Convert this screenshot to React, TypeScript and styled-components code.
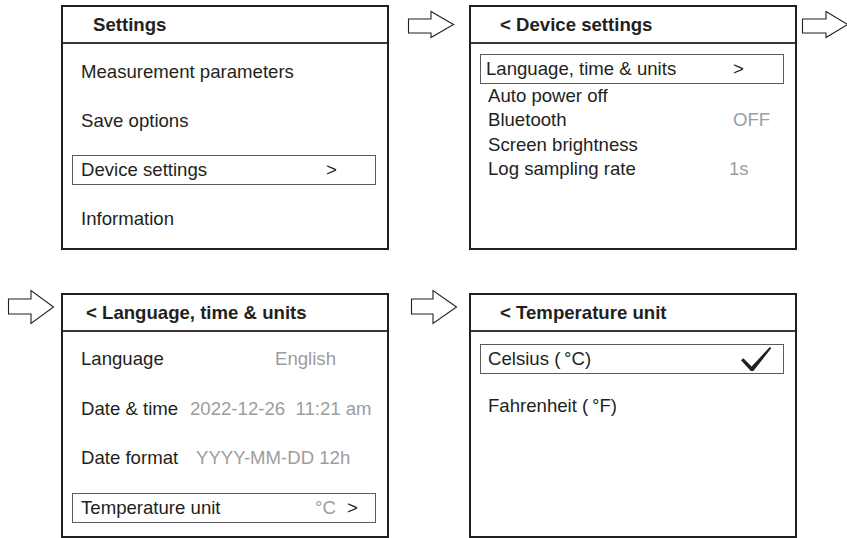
import React from "react";
import styled, { createGlobalStyle } from "styled-components";

const Global = createGlobalStyle`
  html, body { margin: 0; padding: 0; background: #ffffff; }
  body { font-family: "Liberation Sans", Arial, sans-serif; color: #231f20; }
`;

const Page = styled.div`
  width: 847px;
  height: 538px;
  overflow: hidden;
  box-sizing: border-box;
  padding-top: 5px;
  display: grid;
  grid-template-columns: 61px 328px 80px 328px 1fr;
  grid-template-rows: 245px 245px;
  row-gap: 43px;
`;

const ArrowCell = styled.div<{ $left: number; $top: number }>`
  display: flex;
  align-items: flex-start;
  padding-left: ${(p) => p.$left}px;
  margin-top: ${(p) => p.$top}px;
`;

const Panel = styled.section`
  box-sizing: border-box;
  height: 100%;
  border: 2px solid #231f20;
  display: flex;
  flex-direction: column;
  overflow: hidden;
`;

const Header = styled.header<{ $indent: number }>`
  flex: none;
  height: 35px;
  border-bottom: 2px solid #3a3839;
  display: flex;
  align-items: center;
  padding-left: ${(p) => p.$indent}px;
  font-size: 18.6px;
  font-weight: 700;
  white-space: nowrap;
`;

const Body = styled.div<{ $pt: number; $gap: number }>`
  display: flex;
  flex-direction: column;
  gap: ${(p) => p.$gap}px;
  padding: ${(p) => p.$pt}px 11px 0 9px;
`;

const Row = styled.div<{ $h: number; $sel?: boolean; $pl: number; $col?: number }>`
  box-sizing: border-box;
  height: ${(p) => p.$h}px;
  border: 1px solid ${(p) => (p.$sel ? "#5c5a5b" : "transparent")};
  padding-left: ${(p) => p.$pl}px;
  display: grid;
  grid-template-columns: ${(p) => (p.$col ? `${p.$col}px 1fr` : "1fr")};
  align-items: center;
  font-size: 18.6px;
  white-space: pre;
`;

const Label = styled.span`
  color: #231f20;
`;

const Value = styled.span`
  display: flex;
  align-items: center;
  color: #9d9d9d;
`;

const Chevron = styled.span<{ $gap?: number }>`
  color: #231f20;
  margin-left: ${(p) => p.$gap ?? 0}px;
`;

type ArrowProps = { w: number; h: number; hx: number; st: number; sb: number };

const Arrow = ({ w, h, hx, st, sb }: ArrowProps) => (
  <svg width={w + 2} height={h + 2} viewBox={`-1 -1 ${w + 2} ${h + 2}`}>
    <polygon
      points={`0.5,${st} ${hx},${st} ${hx},0.5 ${w - 0.5},${h / 2} ${hx},${h - 0.5} ${hx},${sb} 0.5,${sb}`}
      fill="#ffffff"
      stroke="#231f20"
      strokeWidth={1.1}
      strokeLinejoin="miter"
    />
  </svg>
);

const Check = () => (
  <svg width="31" height="25" viewBox="0 0 31 25">
    <polygon
      points="0,13.2 2.4,11.2 10.6,19.4 28.8,0 30.4,1 12.4,24 9.8,24"
      fill="#231f20"
    />
  </svg>
);

export default function App() {
  return (
    <>
      <Global />
      <Page>
        {/* Row 1 */}
        <div />
        <Panel>
          <Header $indent={30}>Settings</Header>
          <Body $pt={13} $gap={19}>
            <Row $h={30} $pl={8}>
              <Label>Measurement parameters</Label>
            </Row>
            <Row $h={30} $pl={8}>
              <Label>Save options</Label>
            </Row>
            <Row $h={30} $pl={8} $sel $col={245}>
              <Label>Device settings</Label>
              <Value>
                <Chevron>&gt;</Chevron>
              </Value>
            </Row>
            <Row $h={30} $pl={8}>
              <Label>Information</Label>
            </Row>
          </Body>
        </Panel>
        <ArrowCell $left={18} $top={5}>
          <Arrow w={46} h={27} hx={23} st={8} sb={22} />
        </ArrowCell>
        <Panel>
          <Header $indent={29}>&lt; Device settings</Header>
          <Body $pt={10} $gap={0}>
            <Row $h={30} $pl={5} $sel $col={247}>
              <Label>Language, time &amp; units</Label>
              <Value>
                <Chevron>&gt;</Chevron>
              </Value>
            </Row>
            <Row $h={24.3} $pl={7}>
              <Label>Auto power off</Label>
            </Row>
            <Row $h={24.3} $pl={7} $col={245}>
              <Label>Bluetooth</Label>
              <Value>OFF</Value>
            </Row>
            <Row $h={24.3} $pl={7}>
              <Label>Screen brightness</Label>
            </Row>
            <Row $h={24.3} $pl={7} $col={241}>
              <Label>Log sampling rate</Label>
              <Value>1s</Value>
            </Row>
          </Body>
        </Panel>
        <ArrowCell $left={4} $top={5}>
          <Arrow w={46} h={27} hx={24} st={8} sb={22} />
        </ArrowCell>

        {/* Row 2 */}
        <ArrowCell $left={7} $top={-4}>
          <Arrow w={46} h={34} hx={23} st={9} sb={24} />
        </ArrowCell>
        <Panel>
          <Header $indent={23}>&lt; Language, time &amp; units</Header>
          <Body $pt={12} $gap={19.5}>
            <Row $h={30} $pl={8} $col={194}>
              <Label>Language</Label>
              <Value>English</Value>
            </Row>
            <Row $h={30} $pl={8} $col={109}>
              <Label>Date &amp; time</Label>
              <Value>2022-12-26  11:21 am</Value>
            </Row>
            <Row $h={30} $pl={8} $col={115}>
              <Label>Date format</Label>
              <Value>YYYY-MM-DD 12h</Value>
            </Row>
            <Row $h={30} $pl={8} $sel $col={234}>
              <Label>Temperature unit</Label>
              <Value>
                °C
                <Chevron $gap={11}>&gt;</Chevron>
              </Value>
            </Row>
          </Body>
        </Panel>
        <ArrowCell $left={21} $top={-4}>
          <Arrow w={46} h={34} hx={22} st={9} sb={24} />
        </ArrowCell>
        <Panel>
          <Header $indent={29}>&lt; Temperature unit</Header>
          <Body $pt={12} $gap={17}>
            <Row $h={30} $pl={7} $sel $col={253}>
              <Label>Celsius ({"\u2009"}°C)</Label>
              <Value>
                <Check />
              </Value>
            </Row>
            <Row $h={30} $pl={7}>
              <Label>Fahrenheit ({"\u2009"}°F)</Label>
            </Row>
          </Body>
        </Panel>
        <div />
      </Page>
    </>
  );
}
